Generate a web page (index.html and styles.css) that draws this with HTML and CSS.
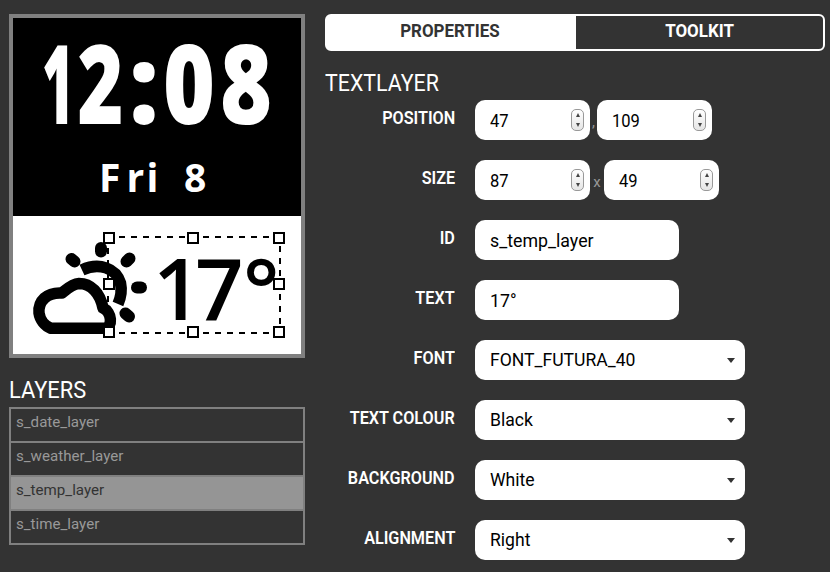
FILE: index.html
```html
<!DOCTYPE html>
<html lang="en">
<head>
<meta charset="utf-8">
<title>Watchface editor</title>
<link rel="stylesheet" href="styles.css">
</head>
<body>
<main class="editor">
  <section class="left">
    <div class="screen">
      <svg width="288" height="336" viewBox="13 18 288 336">
        <rect x="13" y="18" width="288" height="198" fill="#000"/>
        <rect x="13" y="216" width="288" height="138" fill="#fff"/>
        <g class="time" fill="#fff">
          <text x="42" y="124" textLength="32" lengthAdjust="spacingAndGlyphs">1</text>
          <text x="77.500" y="124" textLength="46" lengthAdjust="spacingAndGlyphs">2</text>
          <text x="129" y="124" textLength="30" lengthAdjust="spacingAndGlyphs">:</text>
          <text x="163" y="124" textLength="52" lengthAdjust="spacingAndGlyphs">0</text>
          <text x="220" y="124" textLength="52" lengthAdjust="spacingAndGlyphs">8</text>
        </g>
        <text class="date" x="99 126.5 146.500 165 184" y="192" fill="#fff">Fri 8</text>
        <g fill="none" stroke="#000" stroke-width="11.500" stroke-linejoin="round">
          <path d="M51 328.300H105C113 327 112 312 103 308C100 293 91 283.500 79 283.500C72 284 67 289 62 293C47 292 38 301 39 313C40 320 45 326 51 328.300Z"/>
          <path d="M82 270C99 262 116 268 120.500 283C122 290 121 297 118 304" stroke-width="11.500"/>
        </g>
        <g stroke="#000" stroke-width="12" stroke-linecap="round">
          <path d="M101 248V251.500"/><path d="M71.500 259L74.500 261.500"/><path d="M129.500 258.500L126.500 261.500"/><path d="M137 287.500H141"/><path d="M125.500 313.500L129 316.500"/>
        </g>
        <path d="M107 237H281M107 333H281" stroke="#000" stroke-width="2" stroke-dasharray="6 6" fill="none"/>
        <path d="M108 236V334M280 234V334" stroke="#000" stroke-width="2" stroke-dasharray="6 6" fill="none"/>
        <text class="temp" x="153 195 243" y="320">17°</text>
        <g fill="#fff" stroke="#000" stroke-width="2">
          <rect x="104" y="233" width="10" height="10"/><rect x="188" y="233" width="10" height="10"/><rect x="274" y="233" width="10" height="10"/>
          <rect x="104" y="279" width="10" height="10"/><rect x="274" y="279" width="10" height="10"/>
          <rect x="104" y="327" width="10" height="10"/><rect x="188" y="327" width="10" height="10"/><rect x="274" y="327" width="10" height="10"/>
        </g>
      </svg>
    </div>
    <h2><span class="layers-title">LAYERS</span></h2>
    <ul class="layers">
      <li><span>s_date_layer</span></li>
      <li><span>s_weather_layer</span></li>
      <li class="selected"><span>s_temp_layer</span></li>
      <li><span>s_time_layer</span></li>
    </ul>
  </section>
  <section class="right">
    <nav class="tabs"><div class="tab active"><span>PROPERTIES</span></div><div class="tab"><span>TOOLKIT</span></div></nav>
    <h2 class="type"><span>TEXTLAYER</span></h2>
    <div class="form">
      <div class="row"><label><span>POSITION</span></label>
        <div class="field number"><span>47</span><i class="spin"></i></div><div class="sep comma">,</div><div class="field number"><span>109</span><i class="spin"></i></div></div>
      <div class="row"><label><span>SIZE</span></label>
        <div class="field number"><span>87</span><i class="spin"></i></div><div class="sep times">x</div><div class="field number"><span>49</span><i class="spin"></i></div></div>
      <div class="row"><label><span>ID</span></label><div class="field text"><span>s_temp_layer</span></div></div>
      <div class="row"><label><span>TEXT</span></label><div class="field text"><span>17°</span></div></div>
      <div class="row"><label><span>FONT</span></label><div class="field select"><span>FONT_FUTURA_40</span></div></div>
      <div class="row"><label><span>TEXT COLOUR</span></label><div class="field select"><span>Black</span></div></div>
      <div class="row"><label><span>BACKGROUND</span></label><div class="field select"><span>White</span></div></div>
      <div class="row"><label><span>ALIGNMENT</span></label><div class="field select"><span>Right</span></div></div>
    </div>
  </section>
</main>
</body>
</html>
```
FILE: styles.css
```css
* { box-sizing: border-box; }
body { margin: 0; background: #333; color: #fff; font-family: Roboto, "Liberation Sans", sans-serif; overflow: hidden; }
span { display: inline-block; white-space: nowrap; transform-origin: left center; }
.editor { display: flex; gap: 20px; padding: 14px 5px 0 9px; height: 572px; }
.left { width: 296px; }
.right { width: 500px; }
.screen { height: 344px; border: 4px solid #808080; }
.screen svg { display: block; }
.time { font: 800 110px "Open Sans", sans-serif; }
.date { font: 700 39px "Open Sans", sans-serif; }
.temp { font: 600 85px "Open Sans", sans-serif; }
h2 { margin: 0; font-size: 24px; font-weight: 400; line-height: 28px; }
.left h2 { margin-top: 18px; height: 31px; }
.layers-title { transform: scaleX(.91); }
.layers { list-style: none; margin: 0; padding: 0; border: 2px solid #808080; }
.layers li { height: 34px; padding: 3px 5px; border-bottom: 2px solid #808080; color: #999; font-size: 15.5px; line-height: 20px; }
.layers li:last-child { height: 32px; border-bottom: 0; }
.layers .selected { background: #959595; color: #333; }
.layers span { transform: scaleX(.975); }
.tabs { display: flex; height: 37px; border: 2px solid #fff; border-radius: 6px; }
.tab { flex: 1; text-align: center; font-size: 18px; font-weight: 700; line-height: 30px; }
.tab span { transform-origin: center; transform: scaleX(.94); }
.active { background: #fff; color: #333; flex: 0 0 249px; padding-right: 3px; }
.type { height: 49px; padding-top: 18px; }
.type span { transform: scaleX(.89); }
.form { display: grid; gap: 20px; }
.row { display: flex; height: 40px; }
label { width: 130px; margin-right: 20px; text-align: right; font-size: 18px; font-weight: 600; line-height: 36px; }
label span { transform-origin: right center; transform: scaleX(.9); }
.field { height: 40px; background: #fff; border-radius: 10px; color: #000; padding-left: 15px; font-size: 19px; line-height: 41px; display: flex; align-items: center; justify-content: space-between; }
.field span { transform: scaleX(.935); }
.number { width: 115px; padding-right: 6px; }
.number span { transform: scaleX(.87); }
.text { width: 204px; }
.select { width: 270px; padding-right: 10px; line-height: 38px; }
.select span { transform: scaleX(.925); }
.select::after { content: ""; border: 4.5px solid transparent; border-top: 5px solid #333; border-bottom: 0; }
.sep { color: #999; font-size: 15px; line-height: 45px; text-align: center; }
.comma { width: 7px; }
.times { width: 14px; }
.spin { width: 13px; height: 22px; border: 1px solid #999; border-radius: 5px; background: linear-gradient(#fff, #e5e5e5); display: flex; flex-direction: column; align-items: center; justify-content: center; gap: 6px; }
.spin::before, .spin::after { content: ""; border: 2.5px solid transparent; }
.spin::before { border-bottom: 4px solid #444; border-top: 0; }
.spin::after { border-top: 4px solid #444; border-bottom: 0; }
```
